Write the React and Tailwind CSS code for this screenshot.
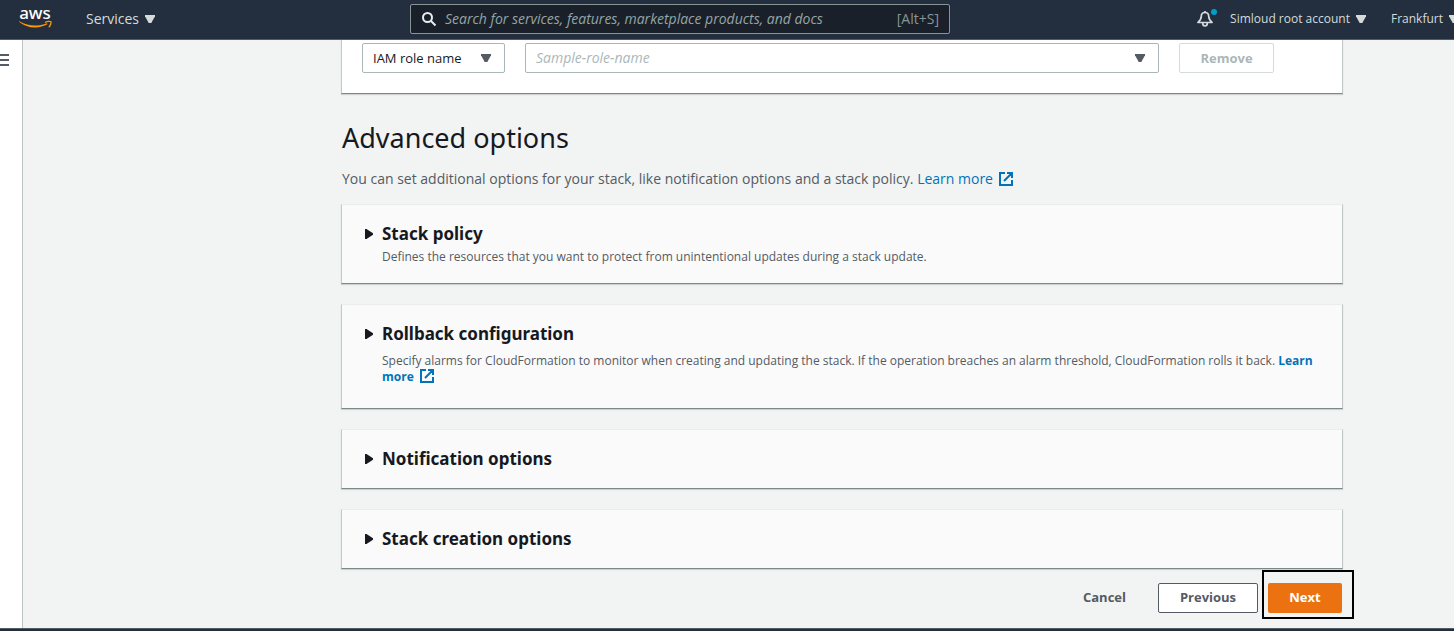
import React from "react";

function Caret({ className }) {
  return (
    <svg viewBox="0 0 10 8" className={className} aria-hidden="true">
      <path d="M0 0h10v1.200L6.300 8H3.700L0 1.200z" fill="currentColor" />
    </svg>
  );
}

function ExternalIcon() {
  return (
    <svg
      viewBox="0 0 14 14"
      className="ml-1.5 inline-block h-3.5 w-3.5 align-[-2px]"
      fill="none"
      stroke="currentColor"
      strokeWidth="2"
      aria-hidden="true"
    >
      <path d="M6 1H1v12h12V8M8 1h5v5M13 1L5 9" />
    </svg>
  );
}

function AwsLogo() {
  return (
    <svg viewBox="0 0 36 32" className="h-8 w-9" role="img" aria-label="aws">
      <text
        x="18"
        y="16"
        textAnchor="middle"
        fontFamily="'Noto Sans', sans-serif"
        fontSize="17"
        fontWeight="500"
        fill="#fff"
      >
        aws
      </text>
      <path d="M2 18.700c8 7 20 7.300 28.500 2.600l-.6-1.100c-9 3.600-18.500 3.200-27.500-2z" fill="#f90" />
      <path d="M28.500 19.300c2-1.200 4.900-1.200 5.400-.6s-.2 3.300-1.700 5" fill="none" stroke="#f90" strokeWidth="1.300" strokeLinecap="round" />
    </svg>
  );
}

function Bell() {
  return (
    <svg viewBox="0 0 16 16" className="h-4 w-4" fill="none" stroke="currentColor" strokeWidth="1.700" aria-hidden="true">
      <path d="M8 1.500C5.500 1.500 4.300 3.300 4.300 5.300c0 2.700-1.200 4.400-3.300 6.200h14c-2.100-1.800-3.300-3.500-3.300-6.200 0-2-1.200-3.800-3.700-3.800z" strokeLinejoin="round" />
      <path d="M5.700 12c0 1.800 1 3 2.300 3s2.300-1.200 2.300-3M8 0v1.500" />
    </svg>
  );
}

function Header() {
  return (
    <header className="flex h-10 shrink-0 items-center overflow-hidden border-b border-[#545b64] bg-[#232f3e] pb-px whitespace-nowrap text-[#d5dbdb]">
      <div className="flex w-[410px] shrink-0 items-center pl-[17px]">
        <a href="#home" aria-label="AWS home">
          <AwsLogo />
        </a>
        <button type="button" className="ml-[33px] flex items-center gap-1.5 text-sm">
          Services
          <Caret className="h-2 w-2.5" />
        </button>
      </div>
      <label className="flex h-[30px] max-w-[540px] flex-1 items-center rounded-xs border border-[#879596] bg-[#1a2029] px-2.5 text-sm text-[#879596]">
        <svg viewBox="0 0 16 16" className="h-4 w-4 shrink-0 text-[#eaeded]" fill="none" stroke="currentColor" strokeWidth="2" aria-hidden="true">
          <circle cx="6.500" cy="6.500" r="4.500" />
          <path d="M10 10l4.500 4.500" />
        </svg>
        <input
          type="search"
          aria-label="Search"
          placeholder="Search for services, features, marketplace products, and docs"
          className="ml-2 min-w-0 flex-1 bg-transparent outline-none placeholder:text-[#95a5a6] placeholder:italic"
        />
        <span>[Alt+S]</span>
      </label>
      <nav className="-mr-[5px] ml-auto flex shrink-0 items-center text-xs">
        <button type="button" aria-label="Notifications" className="relative mr-[17px]">
          <Bell />
          <span className="absolute -top-0.5 -right-1 h-1.5 w-1.5 rounded-full bg-[#00a1c9]" />
        </button>
        <button type="button" className="mr-[25px] flex items-center gap-1.5">
          Simloud root account
          <Caret className="h-2 w-2.5" />
        </button>
        <button type="button" className="flex items-center gap-1.5">
          Frankfurt
          <Caret className="h-2 w-2.5" />
        </button>
      </nav>
    </header>
  );
}

const cardEdge =
  "border-x border-b border-x-[#c3c8c9] border-b-[#7b8788] shadow-[0_1px_1px_rgba(0,28,36,0.15)]";

function Panel({ title, className, children }) {
  return (
    <section className={`border-t border-t-[#eaeded] bg-[#fafafa] pr-5 pl-[22px] ${cardEdge} ${className}`}>
      <h2 className="font-['Noto_Sans',sans-serif] text-[17px] leading-[22px] font-bold text-[#16191f]">
        <button type="button" aria-expanded="false" className="flex items-center gap-[9px] text-left">
          <svg viewBox="0 0 9 10" className="h-2.5 w-[9px]" aria-hidden="true">
            <path d="M1 0h1.500L9 4.200v1.600L2.500 10H1z" fill="currentColor" />
          </svg>
          {title}
        </button>
      </h2>
      {children}
    </section>
  );
}

export default function App() {
  return (
    <div className="flex min-h-screen flex-col overflow-x-hidden bg-[#f2f3f3] font-['Open_Sans','Noto_Sans',sans-serif] text-[#545b64]">
      <Header />
      <div className="flex flex-1">
        <aside className="w-[23px] shrink-0 border-r border-[#bfc4c4] bg-white pt-3.5">
          <button type="button" aria-label="Open navigation" className="flex w-[9px] flex-col gap-[3px]">
            <span className="h-0.5 w-full bg-[#545b64]" />
            <span className="h-0.5 w-full bg-[#545b64]" />
            <span className="h-0.5 w-full bg-[#545b64]" />
          </button>
        </aside>
        <main className="min-w-0 flex-1 pr-[111px] pl-[318px]">
          <div className={`flex gap-5 bg-white px-5 pt-[3px] pb-5 text-sm ${cardEdge}`}>
            <div className="relative w-[143px] shrink-0">
              <select
                aria-label="IAM role type"
                className="h-[30px] w-full appearance-none rounded-xs border border-[#aab7b8] bg-white pl-2.5 text-[13px] text-[#16191f]"
              >
                <option>IAM role name</option>
              </select>
              <Caret className="pointer-events-none absolute top-[11px] right-3.5 h-2 w-2.5" />
            </div>
            <div className="relative flex-1">
              <select
                aria-label="IAM role"
                className="h-[30px] w-full appearance-none rounded-xs border border-[#aab7b8] bg-white pl-2.5 text-[#aab7b8] italic"
              >
                <option>Sample-role-name</option>
              </select>
              <Caret className="pointer-events-none absolute top-[11px] right-3.5 h-2 w-2.5" />
            </div>
            <button
              type="button"
              disabled
              className="mr-12 h-[30px] w-[95px] shrink-0 rounded-xs border border-[#d5dbdb] bg-white text-[13px] font-bold text-[#aab7b8]"
            >
              Remove
            </button>
          </div>

          <h1 className="mt-[26px] pl-px font-['Noto_Sans',sans-serif] text-[27px] leading-9 text-[#16191f]">
            Advanced options
          </h1>
          <p className="mt-3 mb-3.5 pl-px text-sm leading-[22px]">
            You can set additional options for your stack, like notification options and a stack policy.{" "}
            <a href="#options" className="text-[#0073bb]">
              Learn more
              <ExternalIcon />
            </a>
          </p>

          <div className="flex flex-col gap-5">
            <Panel title="Stack policy" className="pt-[18px] pb-3.5">
              <p className="pl-[18px] text-xs leading-6">
                Defines the resources that you want to protect from unintentional updates during a stack update.
              </p>
            </Panel>
            <Panel title="Rollback configuration" className="pt-[18px] pb-[23px]">
              <p className="mt-2 pl-[18px] text-xs leading-4">
                Specify alarms for CloudFormation to monitor when creating and updating the stack. If the operation
                breaches an alarm threshold, CloudFormation rolls it back.{" "}
                <a href="#rollback" className="font-bold text-[#0073bb]">
                  Learn more
                  <ExternalIcon />
                </a>
              </p>
            </Panel>
            <Panel title="Notification options" className="pt-[18px] pb-[18px]" />
            <Panel title="Stack creation options" className="pt-[18px] pb-[18px]" />
          </div>

          <div className="flex items-center justify-end pt-3.5 pr-px pb-3.5 text-[13px] font-bold">
            <button type="button" className="h-[30px] px-5">
              Cancel
            </button>
            <button type="button" className="ml-3 h-[30px] w-[100px] rounded-xs border border-[#545b64] bg-white">
              Previous
            </button>
            <div className="relative ml-2.5">
              <button type="button" className="block h-[30px] w-[74px] rounded-xs bg-[#ec7211] text-white">
                Next
              </button>
              <span className="pointer-events-none absolute -top-[13px] -right-3 -bottom-1.5 -left-1.5 border-2 border-black" />
            </div>
          </div>
        </main>
      </div>
      <footer className="h-[3px] shrink-0 border-t border-[#545b64] bg-[#232f3e]" />
    </div>
  );
}
